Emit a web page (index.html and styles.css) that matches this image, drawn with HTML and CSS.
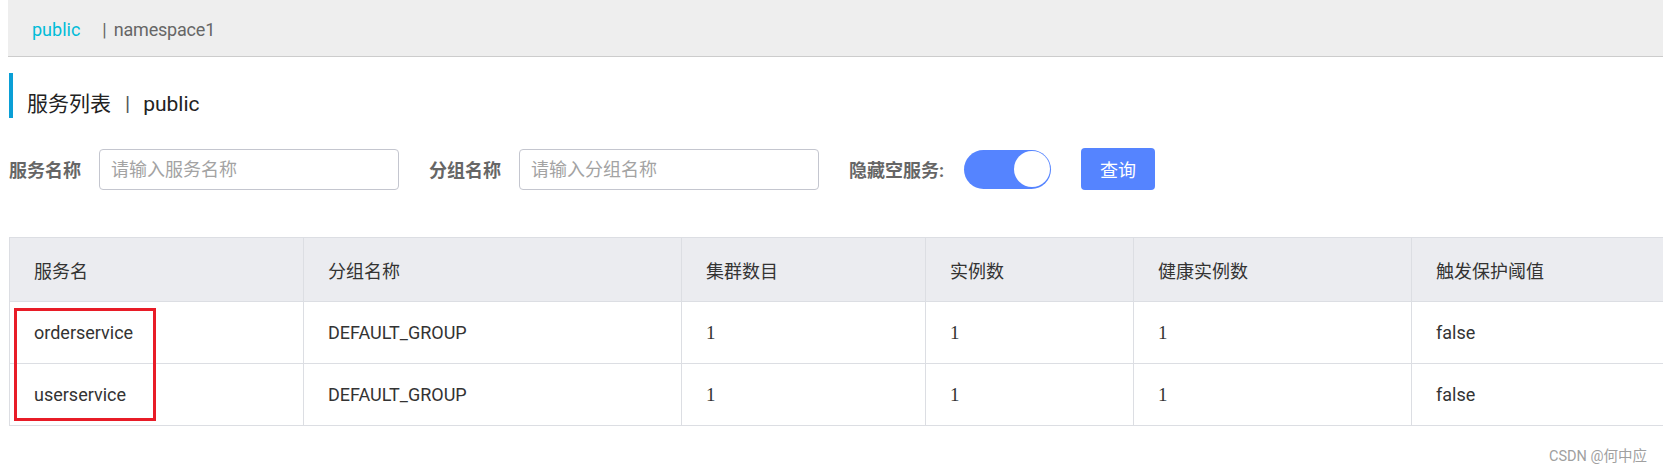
FILE: index.html
```html
<!DOCTYPE html>
<html lang="zh-CN">
<head>
<meta charset="utf-8">
<title>服务列表</title>
<link rel="stylesheet" href="styles.css">
</head>
<body>
<div class="ns-bar">
  <span class="ns-active">public</span><span class="ns-sep">|</span><span class="ns-item">namespace1</span>
</div>
<main class="content">
  <h1 class="page-title">服务列表<span class="title-sep">|</span>public</h1>
  <div class="filters">
    <label class="f-label">服务名称</label>
    <input class="f-input" type="text" placeholder="请输入服务名称">
    <label class="f-label">分组名称</label>
    <input class="f-input" type="text" placeholder="请输入分组名称">
    <label class="f-label f-label-wide">隐藏空服务:</label>
    <span class="switch"><span class="knob"></span></span>
    <button class="btn-query" type="button">查询</button>
  </div>
  <div class="table-wrap">
    <table class="svc-table">
      <colgroup>
        <col class="c1"><col class="c2"><col class="c3"><col class="c4"><col class="c5"><col class="c6">
      </colgroup>
      <thead>
        <tr><th>服务名</th><th>分组名称</th><th>集群数目</th><th>实例数</th><th>健康实例数</th><th>触发保护阈值</th></tr>
      </thead>
      <tbody>
        <tr><td>orderservice</td><td>DEFAULT_GROUP</td><td class="num">1</td><td class="num">1</td><td class="num">1</td><td>false</td></tr>
        <tr><td>userservice</td><td>DEFAULT_GROUP</td><td class="num">1</td><td class="num">1</td><td class="num">1</td><td>false</td></tr>
      </tbody>
    </table>
    <div class="mark-box"></div>
  </div>
  <div class="watermark">CSDN @何中应</div>
</main>
</body>
</html>
```
FILE: styles.css
```css
html, body {
  margin: 0;
  padding: 0;
  background: #fff;
}
body {
  margin-left: 8px;
  font-family: Roboto, "Noto Sans CJK SC", sans-serif;
  color: #333;
  overflow: hidden;
}
.ns-bar {
  height: 53px;
  padding-top: 3px;
  line-height: 53px;
  background: #eeeeee;
  border-bottom: 1px solid #cccccc;
  padding-left: 24px;
  font-size: 18px;
}
.ns-active {
  color: #00bcd8;
  margin-right: 22px;
}
.ns-sep {
  color: #666;
  margin-right: 7px;
}
.ns-item {
  color: #666;
  letter-spacing: -0.2px;
}
.content {
  margin-left: 1px;
}
.page-title {
  margin: 16px 0 0 0;
  height: 27px;
  padding-top: 18px;
  line-height: 27px;
  border-left: 4px solid #0a9fd6;
  padding-left: 14px;
  font-size: 21px;
  font-weight: normal;
  color: #222;
}
.title-sep {
  color: #555;
  margin: 0 13px 0 14px;
}
.filters {
  margin-top: 30px;
  height: 42px;
  display: flex;
  align-items: center;
}
.f-label {
  font-size: 18px;
  font-weight: bold;
  color: #666;
  margin-right: 18px;
}
.f-label-wide {
  margin-right: 20px;
}
.f-input {
  box-sizing: border-box;
  width: 300px;
  height: 41px;
  border: 1px solid #c4c6cf;
  border-radius: 4px;
  padding: 0 11px;
  font-family: Roboto, "Noto Sans CJK SC", sans-serif;
  font-size: 18px;
  color: #333;
  margin-right: 30px;
  outline: none;
}
.f-input::placeholder {
  color: #a3a3a3;
}
.switch {
  box-sizing: border-box;
  width: 87px;
  height: 39px;
  border-radius: 20px;
  background: #5584ff;
  display: flex;
  align-items: center;
  justify-content: flex-end;
  padding: 0 1px;
  margin-right: 30px;
}
.knob {
  width: 36px;
  height: 36px;
  border-radius: 50%;
  background: #fff;
}
.btn-query {
  width: 74px;
  height: 42px;
  border: none;
  border-radius: 4px;
  background: #5584ff;
  color: #fff;
  font-family: Roboto, "Noto Sans CJK SC", sans-serif;
  font-size: 18px;
  padding: 0;
}
.table-wrap {
  position: relative;
  margin-top: 47px;
}
.svc-table {
  width: 1654px;
  border-collapse: collapse;
  table-layout: fixed;
  font-size: 18px;
}
.c1 { width: 294px; }
.c2 { width: 378px; }
.c3 { width: 244px; }
.c4 { width: 208px; }
.c5 { width: 278px; }
.c6 { width: 252px; }
.svc-table th,
.svc-table td {
  border: 1px solid #dcdee3;
  padding: 0 0 0 24px;
  text-align: left;
  vertical-align: middle;
  color: #333;
}
.svc-table th:last-child,
.svc-table td:last-child {
  border-right: none;
}
.svc-table th {
  height: 63px;
  background: #ebecf0;
  font-weight: normal;
}
.svc-table td {
  height: 61px;
}
.svc-table td.num {
  font-family: "Liberation Serif", serif;
  font-size: 19px;
}
.mark-box {
  position: absolute;
  left: 5px;
  top: 71px;
  width: 142px;
  height: 113px;
  box-sizing: border-box;
  border: 3px solid #e81c27;
}
.watermark {
  text-align: right;
  padding-right: 16px;
  margin-top: 21px;
  line-height: 20px;
  font-size: 14.5px;
  color: #a0a0a0;
}
```
